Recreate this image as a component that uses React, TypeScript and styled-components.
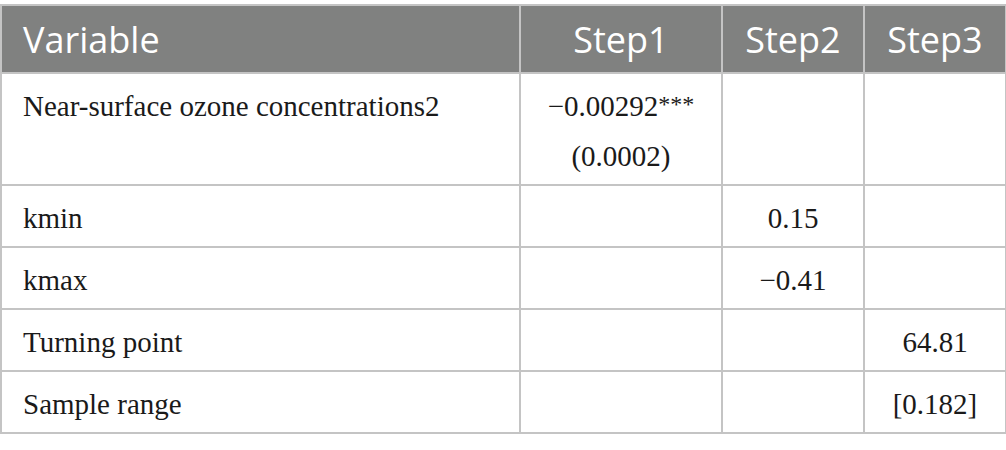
import React from "react";
import styled, { createGlobalStyle } from "styled-components";

const Global = createGlobalStyle`
  html, body { margin: 0; padding: 0; background: #ffffff; }
  body { font-family: "Liberation Serif", "Times New Roman", serif; }
`;

const Page = styled.div`
  padding-top: 4px;
  width: 1006px;
`;

const Table = styled.table`
  width: 1005px;
  border-collapse: collapse;
  table-layout: fixed;
  border: 2px solid #c4c4c4;
`;

const HeadCell = styled.th<{ $align?: "left" | "center" }>`
  background: #808180;
  color: #ffffff;
  font-family: "Open Sans", "Liberation Sans", sans-serif;
  font-weight: 400;
  font-size: 36px;
  height: 66px;
  padding: 0 21px;
  text-align: ${(p) => p.$align ?? "center"};
  vertical-align: middle;
  border: 2px solid #c4c4c4;
  border-top: none;
`;

const Cell = styled.td<{ $align?: "left" | "center" }>`
  font-family: "Liberation Serif", "Times New Roman", serif;
  font-size: 29px;
  color: #1a1a1a;
  line-height: 48px;
  padding: 8px 21px 4px;
  text-align: ${(p) => p.$align ?? "center"};
  vertical-align: top;
  border: 2px solid #c4c4c4;
`;

const Line = styled.div``;

const Stars = styled.span`
  font-size: 24px;
  position: relative;
  top: -4px;
`;

type Row = { label: string; s1?: React.ReactNode; s2?: string; s3?: string };

const rows: Row[] = [
  {
    label: "Near-surface ozone concentrations2",
    s1: (
      <>
        <Line>
          −0.00292<Stars>***</Stars>
        </Line>
        <Line>(0.0002)</Line>
      </>
    ),
  },
  { label: "kmin", s2: "0.15" },
  { label: "kmax", s2: "−0.41" },
  { label: "Turning point", s3: "64.81" },
  { label: "Sample range", s3: "[0.182]" },
];

export default function App() {
  return (
    <>
      <Global />
      <Page>
        <Table>
          <colgroup>
            <col style={{ width: 519 }} />
            <col style={{ width: 202 }} />
            <col style={{ width: 142 }} />
            <col style={{ width: 142 }} />
          </colgroup>
          <thead>
            <tr>
              <HeadCell $align="left">Variable</HeadCell>
              <HeadCell>Step1</HeadCell>
              <HeadCell>Step2</HeadCell>
              <HeadCell>Step3</HeadCell>
            </tr>
          </thead>
          <tbody>
            {rows.map((r) => (
              <tr key={r.label}>
                <Cell $align="left">{r.label}</Cell>
                <Cell>{r.s1}</Cell>
                <Cell>{r.s2}</Cell>
                <Cell>{r.s3}</Cell>
              </tr>
            ))}
          </tbody>
        </Table>
      </Page>
    </>
  );
}
